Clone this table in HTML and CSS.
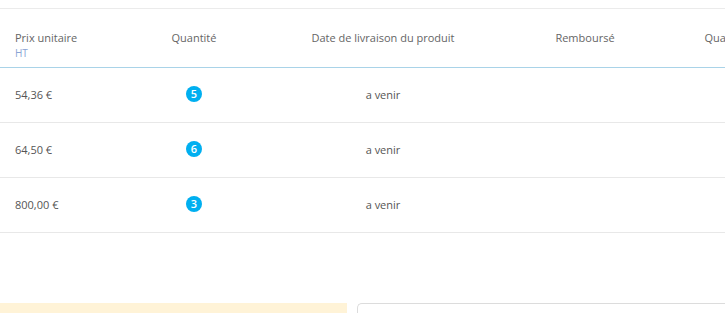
FILE: index.html
```html
<!DOCTYPE html>
<html lang="fr">
<head>
    <meta charset="UTF-8">
    <meta name="viewport" content="width=device-width, initial-scale=1.0">
    <title>Commande - Produits</title>
    <link rel="stylesheet" href="styles.css">
</head>
<body>
    <div class="page">
        <!-- Liste des produits de la commande -->
        <div class="products">
            <div class="row head">
                <div class="cell left">
                    <span class="title">Prix unitaire</span>
                    <small class="tax">HT</small>
                </div>
                <div class="cell"><span class="title">Quantité</span></div>
                <div class="cell"><span class="title">Date de livraison du produit</span></div>
                <div class="cell"><span class="title">Remboursé</span></div>
                <div class="cell"><span class="title">Quantité remboursée</span></div>
            </div>

            <div class="row">
                <div class="cell left">54,36 €</div>
                <div class="cell"><span class="badge">5</span></div>
                <div class="cell">a venir</div>
                <div class="cell"></div>
                <div class="cell"></div>
            </div>
            <div class="row">
                <div class="cell left">64,50 €</div>
                <div class="cell"><span class="badge">6</span></div>
                <div class="cell">a venir</div>
                <div class="cell"></div>
                <div class="cell"></div>
            </div>
            <div class="row">
                <div class="cell left">800,00 €</div>
                <div class="cell"><span class="badge">3</span></div>
                <div class="cell">a venir</div>
                <div class="cell"></div>
                <div class="cell"></div>
            </div>
        </div>

        <!-- Bas de page : message + panneau -->
        <div class="bottom">
            <div class="alert-warning"></div>
            <div class="panel"></div>
        </div>
    </div>
</body>
</html>
```

FILE: styles.css
```css
* {
    margin: 0;
    padding: 0;
    box-sizing: border-box;
}
body {
    font-family: "Open Sans", Arial, sans-serif;
    font-size: 11px;
    color: #555;
    background: #fff;
}
.page {
    width: 725px;
    height: 313px;
    padding-top: 8px;
    overflow: hidden;
}
.products {
    width: 848px;
    border-top: 1px solid #ebebeb;
}
.row {
    display: grid;
    grid-template-columns: 120px 148px 230px 174px 176px;
    height: 55px;
    padding-bottom: 2px;
    border-bottom: 1px solid #e8e8e8;
    align-items: center;
    line-height: 15px;
}
.row.head {
    height: 59px;
    border-bottom: 1px solid #a9d3e8;
    align-items: start;
    padding: 21px 0 0;
}
.cell {
    text-align: center;
    white-space: nowrap;
}
.cell.left {
    text-align: left;
    padding-left: 15px;
}
.title {
    display: block;
    color: #656565;
    line-height: 16px;
}
.tax {
    display: block;
    color: #8aa4d4;
    font-size: 10px;
    line-height: 14px;
}
.badge {
    display: inline-block;
    min-width: 16px;
    height: 16px;
    line-height: 16px;
    border-radius: 8px;
    background: #00aff0;
    color: #fff;
    font-size: 11px;
    font-weight: 600;
    text-align: center;
}
.bottom {
    display: flex;
    gap: 10px;
    margin-top: 70px;
}
.alert-warning {
    width: 347px;
    height: 30px;
    background: #fff3d7;
}
.panel {
    flex: 1;
    height: 30px;
    border: 1px solid #dcdcdc;
    border-right: none;
    border-radius: 5px 0 0 0;
}
```
